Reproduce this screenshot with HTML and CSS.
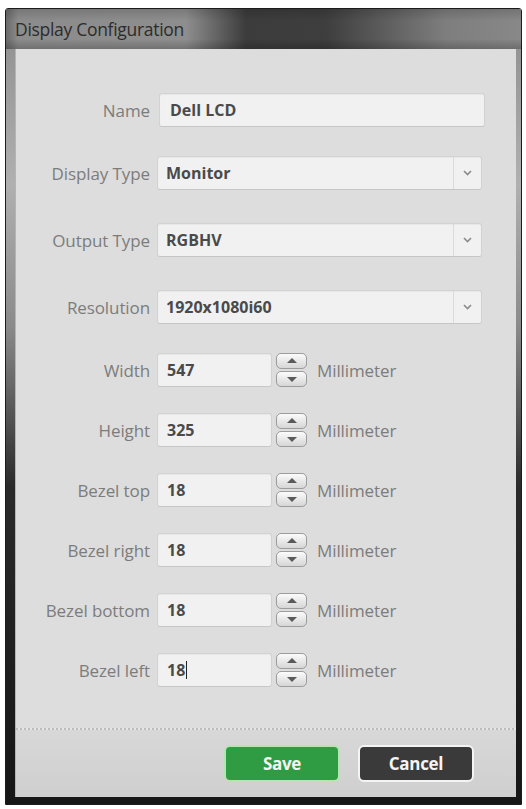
FILE: index.html
```html
<!DOCTYPE html>
<html lang="en">
<head>
  <meta charset="UTF-8" />
  <title>Display Configuration</title>
  <link rel="stylesheet" href="styles.css">
</head>
<body>
  <div class="window">
    <div class="titlebar">
      <span class="title">Display Configuration</span>
    </div>

    <div class="body">
      <form class="fields">
        <div class="row">
          <label>Name</label>
          <div class="input wide">Dell LCD</div>
        </div>

        <div class="row shift-sm">
          <label>Display Type</label>
          <div class="select">
            <span class="value">Monitor</span>
            <span class="arrow">
              <svg width="9" height="6" viewBox="0 0 9 6"><path d="M1 1l3.5 3.5L8 1" fill="none" stroke="#8a8a8a" stroke-width="1.6"/></svg>
            </span>
          </div>
        </div>

        <div class="row shift-lg">
          <label>Output Type</label>
          <div class="select">
            <span class="value">RGBHV</span>
            <span class="arrow">
              <svg width="9" height="6" viewBox="0 0 9 6"><path d="M1 1l3.5 3.5L8 1" fill="none" stroke="#8a8a8a" stroke-width="1.6"/></svg>
            </span>
          </div>
        </div>

        <div class="row shift-lg">
          <label>Resolution</label>
          <div class="select">
            <span class="value">1920x1080i60</span>
            <span class="arrow">
              <svg width="9" height="6" viewBox="0 0 9 6"><path d="M1 1l3.5 3.5L8 1" fill="none" stroke="#8a8a8a" stroke-width="1.6"/></svg>
            </span>
          </div>
        </div>

        <div class="row shift-sm">
          <label>Width</label>
          <div class="number">
            <div class="input short">547</div>
            <div class="spinner"><span class="up"></span><span class="down"></span></div>
            <span class="unit">Millimeter</span>
          </div>
        </div>

        <div class="row">
          <label>Height</label>
          <div class="number">
            <div class="input short">325</div>
            <div class="spinner"><span class="up"></span><span class="down"></span></div>
            <span class="unit">Millimeter</span>
          </div>
        </div>

        <div class="row">
          <label>Bezel top</label>
          <div class="number">
            <div class="input short">18</div>
            <div class="spinner"><span class="up"></span><span class="down"></span></div>
            <span class="unit">Millimeter</span>
          </div>
        </div>

        <div class="row">
          <label>Bezel right</label>
          <div class="number">
            <div class="input short">18</div>
            <div class="spinner"><span class="up"></span><span class="down"></span></div>
            <span class="unit">Millimeter</span>
          </div>
        </div>

        <div class="row">
          <label>Bezel bottom</label>
          <div class="number">
            <div class="input short">18</div>
            <div class="spinner"><span class="up"></span><span class="down"></span></div>
            <span class="unit">Millimeter</span>
          </div>
        </div>

        <div class="row">
          <label>Bezel left</label>
          <div class="number">
            <div class="input short">18<span class="caret"></span></div>
            <div class="spinner"><span class="up"></span><span class="down"></span></div>
            <span class="unit">Millimeter</span>
          </div>
        </div>
      </form>

      <div class="footer">
        <button class="btn save">Save</button>
        <button class="btn cancel">Cancel</button>
      </div>
    </div>
  </div>
</body>
</html>
```

FILE: styles.css
```css
* {
  box-sizing: border-box;
  margin: 0;
  padding: 0;
}

body {
  background: #fff;
  font-family: 'Open Sans', 'Noto Sans', sans-serif;
}

/* === WINDOW FRAME === */
.window {
  margin: 8px 0 0 5px;
  width: 517px;
  height: 797px;
  border: 1px solid #1c1c1c;
  border-radius: 3px 3px 0 0;
  background: linear-gradient(to bottom, #8c8c8c 0%, #b0b0b0 22%, #8a8a8a 40%, #2a2a2a 60%, #161616 100%);
  display: flex;
  flex-direction: column;
}

.titlebar {
  height: 40px;
  padding: 0 0 0 9px;
  display: flex;
  align-items: center;
  background:
    linear-gradient(to bottom, rgba(0,0,0,0.15) 0, rgba(0,0,0,0) 30%, rgba(0,0,0,0) 75%, rgba(0,0,0,0.2) 100%),
    linear-gradient(to right, #6a6a6a 0, #8c8c8c 12px, #8e8e8e 180px, #3c3c3c 240px, #3e3e3e 320px, #7e7e7e 440px, #888 100%);
}

.title {
  font-size: 17.5px;
  color: #2c2c2c;
  letter-spacing: -0.3px;
}

.body {
  flex: 1;
  margin: 0 5px 7px 9px;
  display: flex;
  flex-direction: column;
  background: #dddddd;
  border-left: 1px solid #b4b4b4;
}

/* === FORM ROWS === */
.fields {
  flex: 1;
  padding-top: 44px;
  display: flex;
  flex-direction: column;
  gap: 26px;
}

.row {
  display: grid;
  grid-template-columns: 134px auto;
  column-gap: 7px;
  align-items: center;
  height: 34px;
}

.row.shift-sm { margin-top: 3px; }
.row.shift-lg { margin-top: 7px; }

.row label {
  text-align: right;
  font-size: 17px;
  color: #7c7c7c;
  letter-spacing: -0.1px;
}

.input,
.select {
  height: 34px;
  background: #f1f1f1;
  border: 1px solid #d2d2d2;
  border-bottom-color: #c6c6c6;
  border-radius: 3px;
  box-shadow: inset 0 1px 1px rgba(0,0,0,0.04);
  font-size: 16px;
  font-weight: 700;
  color: #4a4a4a;
  display: flex;
  align-items: center;
  padding-left: 10px;
}

.input.wide {
  width: 326px;
  margin-left: 2px;
}

.select {
  width: 325px;
  padding-left: 8px;
  justify-content: space-between;
}

.select .value { flex: 1; }

.select .arrow {
  width: 28px;
  height: 100%;
  border-left: 1px solid #dadada;
  display: flex;
  align-items: center;
  justify-content: center;
}

.number {
  display: flex;
  align-items: center;
}

.input.short {
  width: 115px;
  padding-left: 9px;
}

.caret {
  display: inline-block;
  width: 1px;
  height: 18px;
  margin-left: 1px;
  background: #222;
}

/* up/down stepper beside the number fields */
.spinner {
  width: 31px;
  margin-left: 4px;
  display: flex;
  flex-direction: column;
  gap: 2px;
}

.spinner span {
  height: 16px;
  border: 1px solid #9c9c9c;
  border-radius: 5px;
  background: linear-gradient(to bottom, #fbfbfb, #d6d6d6);
  position: relative;
}

.spinner span::after {
  content: "";
  position: absolute;
  left: 50%;
  top: 50%;
  margin-left: -5px;
  border-left: 5px solid transparent;
  border-right: 5px solid transparent;
}

.spinner .up::after {
  margin-top: -3px;
  border-bottom: 5px solid #5a5a5a;
}

.spinner .down::after {
  margin-top: -2px;
  border-top: 5px solid #5a5a5a;
}

.unit {
  margin-left: 10px;
  font-size: 17px;
  color: #7c7c7c;
  letter-spacing: -0.1px;
}

/* === FOOTER === */
.footer {
  height: 69px;
  padding: 17px 42px 0 0;
  display: flex;
  justify-content: flex-end;
  align-items: flex-start;
  gap: 18px;
  background:
    repeating-linear-gradient(to right, #bcbcbc 0 2px, #e6e6e6 2px 4px) top / 100% 2px no-repeat,
    linear-gradient(to bottom, #d8d8d8, #cfcfcf);
}

.btn {
  width: 116px;
  height: 37px;
  border-radius: 6px;
  font-family: inherit;
  font-size: 17px;
  font-weight: 700;
  color: #f4f4f4;
  letter-spacing: -0.3px;
  cursor: pointer;
}

.btn.save {
  background: #2f9b42;
  border: 2px solid #b4e6b4;
}

.btn.cancel {
  background: #3a3a3a;
  border: 2px solid #f4f4f4;
}
```
